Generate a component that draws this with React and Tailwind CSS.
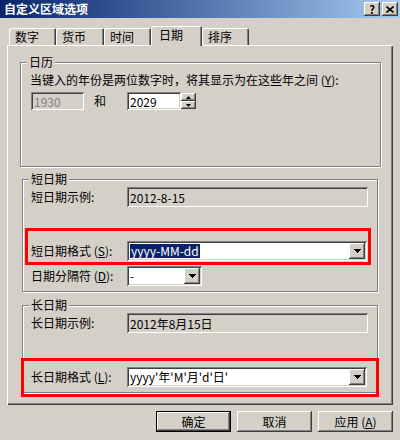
import React from 'react';

const RAISED = 'shadow-[inset_-1px_-1px_0_#404040,inset_1px_1px_0_#ffffff,inset_-2px_-2px_0_#808080,inset_2px_2px_0_#d4d0c8]';
const SUNKEN = 'shadow-[inset_1px_1px_0_#808080,inset_-1px_-1px_0_#ffffff,inset_2px_2px_0_#404040,inset_-2px_-2px_0_#d4d0c8]';
const ETCHED = 'border border-[#808080] shadow-[inset_1px_1px_0_#ffffff,1px_1px_0_#ffffff]';

const TABS = ['数字', '货币', '时间', '日期', '排序'];
const TAB_W = ['w-[47px]', 'w-[48px]', 'w-[47px]', 'w-[51px]', 'w-[47px]'];

function DownArrow() {
  return (
    <svg width="7" height="4" viewBox="0 0 7 4" className="block">
      <path d="M0 0h7L3.5 4z" fill="#000" shapeRendering="crispEdges" />
    </svg>
  );
}

// classic combo box: sunken white field with the drop button inside
function Combo({ className, children }) {
  return (
    <div className={`flex h-[20px] items-center bg-white p-[2px] ${SUNKEN} ${className}`}>
      <div className="flex h-full flex-1 items-center overflow-hidden pl-[1px] text-[12px] leading-[14px] whitespace-nowrap">{children}</div>
      <div className={`flex h-[16px] w-[16px] shrink-0 items-center justify-center bg-[#d4d0c8] ${RAISED}`}>
        <DownArrow />
      </div>
    </div>
  );
}

function Field({ className, children, disabled }) {
  return (
    <div className={`flex items-center px-[3px] pt-[1px] text-[12px] leading-[14px] ${SUNKEN} ${disabled ? 'bg-[#d4d0c8] text-[#808080]' : 'bg-white text-black'} ${className}`}>
      {children}
    </div>
  );
}

function Group({ title, className, children }) {
  return (
    <div className={`relative ${ETCHED} ${className}`}>
      <span className="absolute -top-[8px] left-[6px] bg-[#d4d0c8] px-[2px] text-[12px] leading-[14px]">{title}</span>
      {children}
    </div>
  );
}

function Row({ label, className, children }) {
  return (
    <div className={`flex items-center ${className}`}>
      <div className="w-[96px] text-[12px] leading-[14px] whitespace-nowrap">{label}</div>
      {children}
    </div>
  );
}

function Button({ children, isDefault }) {
  return (
    <div
      className={`flex h-[21px] w-[75px] items-center justify-center bg-[#d4d0c8] text-[12px] leading-[14px] ${
        isDefault
          ? 'shadow-[inset_0_0_0_1px_#000000,inset_-2px_-2px_0_#404040,inset_2px_2px_0_#ffffff,inset_-3px_-3px_0_#808080]'
          : RAISED
      }`}
    >
      {children}
    </div>
  );
}

export default function App() {
  return (
    <div className="relative flex h-[440px] w-[400px] flex-col overflow-hidden bg-[#d4d0c8] font-['Noto_Sans_CJK_SC','Noto_Sans',sans-serif] text-black">
      {/* title bar */}
      <div className="flex h-[18px] items-center justify-between bg-gradient-to-r from-[#0a246a] to-[#a6caf0] pr-[2px] pl-[4px]">
        <span className="text-[12px] leading-[14px] font-bold text-white">自定义区域选项</span>
        <div className="flex gap-[2px]">
          <div className={`flex h-[14px] w-[16px] items-center justify-center bg-[#d4d0c8] text-[11px] leading-[11px] font-bold ${RAISED}`}>?</div>
          <div className={`flex h-[14px] w-[16px] items-center justify-center bg-[#d4d0c8] ${RAISED}`}>
            <svg width="8" height="7" viewBox="0 0 8 7">
              <path d="M0.5 0.5l7 6M7.5 0.5l-7 6" stroke="#000" strokeWidth="1.6" />
            </svg>
          </div>
        </div>
      </div>

      {/* tabs */}
      <div className="flex h-[27px] items-end pl-[9px]">
        {TABS.map((t, i) =>
          t === '日期' ? (
            <div
              key={t}
              className={`relative z-10 -mb-px flex h-[20px] items-start rounded-t-[2px] bg-[#d4d0c8] pt-[2px] pl-[8px] text-[12px] leading-[14px] shadow-[inset_1px_1px_0_#ffffff,inset_-1px_0_0_#404040,inset_-2px_0_0_#808080] ${TAB_W[i]}`}
            >
              {t}
            </div>
          ) : (
            <div
              key={t}
              className={`flex h-[17px] items-center rounded-t-[2px] pl-[6px] text-[12px] leading-[14px] shadow-[inset_1px_1px_0_#ffffff,inset_-1px_0_0_#404040,inset_-2px_0_0_#808080] ${TAB_W[i]}`}
            >
              {t}
            </div>
          )
        )}
      </div>

      {/* tab panel */}
      <div className="ml-[7px] flex h-[360px] w-[386px] flex-col shadow-[inset_1px_1px_0_#ffffff,inset_-1px_-1px_0_#404040,inset_-2px_-2px_0_#808080]">
        <Group title="日历" className="mt-[17px] ml-[13px] h-[105px] w-[361px] pt-[10px] pl-[9px]">
          <div className="text-[12px] leading-[14px] whitespace-nowrap">
            当键入的年份是两位数字时，将其显示为在这些年之间 (<u>Y</u>):
          </div>
          <div className="mt-[5px] flex items-center">
            <Field disabled className="ml-px h-[18px] w-[53px]">1930</Field>
            <span className="ml-[10px] text-[12px] leading-[14px]">和</span>
            <Field className="ml-[21px] h-[18px] w-[54px]">2029</Field>
            <div className="flex flex-col">
              <div className={`flex h-[8px] w-[15px] items-center justify-center bg-[#d4d0c8] ${RAISED}`}>
                <svg width="5" height="3" viewBox="0 0 5 3"><path d="M2.5 0L5 3H0z" fill="#000" /></svg>
              </div>
              <div className={`flex h-[8px] w-[15px] items-center justify-center bg-[#d4d0c8] ${RAISED}`}>
                <svg width="5" height="3" viewBox="0 0 5 3"><path d="M0 0h5L2.5 3z" fill="#000" /></svg>
              </div>
            </div>
          </div>
        </Group>

        <Group title="短日期" className="mt-[12px] ml-[15px] h-[113px] w-[356px] pt-[7px] pl-[8px]">
          <Row label="短日期示例:">
            <Field className="h-[20px] w-[241px] !bg-[#d4d0c8]">2012-8-15</Field>
          </Row>
          <Row label={<>短日期格式 (<u>S</u>):</>} className="mt-[34px]">
            <Combo className="w-[240px]">
              <span className="bg-[#0a246a] px-[1px] text-white">yyyy-MM-dd</span>
            </Combo>
          </Row>
          <Row label={<>日期分隔符 (<u>D</u>):</>} className="mt-[5px]">
            <Combo className="w-[75px]">-</Combo>
          </Row>
        </Group>

        <Group title="长日期" className="mt-[13px] ml-[15px] h-[88px] w-[356px] pt-[7px] pl-[8px]">
          <Row label="长日期示例:">
            <Field className="h-[20px] w-[241px] !bg-[#d4d0c8]">2012年8月15日</Field>
          </Row>
          <Row label={<>长日期格式 (<u>L</u>):</>} className="mt-[34px]">
            <Combo className="w-[240px]">yyyy'年'M'月'd'日'</Combo>
          </Row>
        </Group>
      </div>

      {/* buttons */}
      <div className="mt-[6px] flex justify-end gap-[6px] pr-[7px]">
        <Button isDefault>确定</Button>
        <Button>取消</Button>
        <Button>
          应用 (<u>A</u>)
        </Button>
      </div>

      {/* red annotation boxes drawn over the dialog */}
      <div className="absolute top-[228px] left-[25px] h-[37px] w-[346px] border-[3px] border-[#ff0000]" />
      <div className="absolute top-[358px] left-[21px] h-[39px] w-[358px] border-[3px] border-[#ff0000]" />
    </div>
  );
}
